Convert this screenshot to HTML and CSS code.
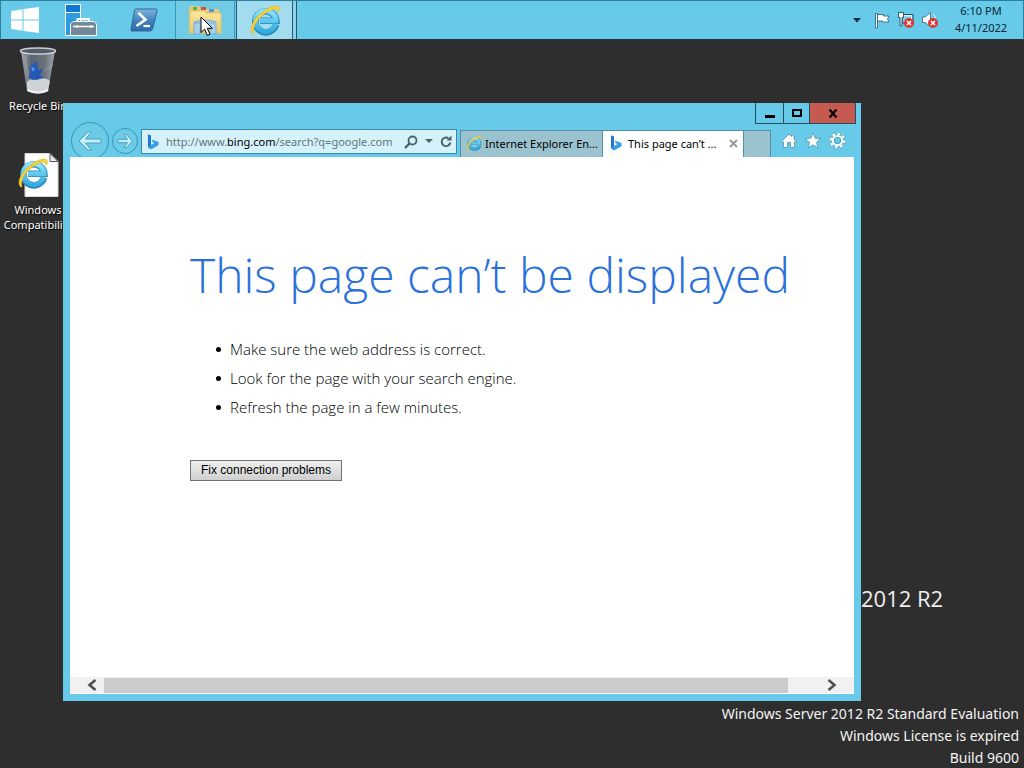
FILE: index.html
```
<!DOCTYPE html>
<html lang="en">
<head>
<meta charset="utf-8">
<title>Desktop</title>
<link rel="stylesheet" href="styles.css">
</head>
<body>
<svg class="defs" aria-hidden="true">
  <defs>
    <linearGradient id="ieBlue" x1="0" y1="0" x2="0" y2="1"><stop offset="0" stop-color="#8fe4fb"/><stop offset="1" stop-color="#37abe0"/></linearGradient>
    <linearGradient id="psBlue" x1="0" y1="0" x2="0" y2="1"><stop offset="0" stop-color="#82b4dc"/><stop offset=".5" stop-color="#4585be"/><stop offset="1" stop-color="#2b6aa8"/></linearGradient>
    <linearGradient id="bin" x1="0" y1="0" x2="1" y2="0"><stop offset="0" stop-color="#a5acb3"/><stop offset=".3" stop-color="#5b636d"/><stop offset=".7" stop-color="#6a727b"/><stop offset="1" stop-color="#a0a7ad"/></linearGradient>
    <linearGradient id="folder" x1="0" y1="0" x2="0" y2="1"><stop offset="0" stop-color="#fbe9a2"/><stop offset="1" stop-color="#e9c862"/></linearGradient>
    <symbol id="ie" viewBox="0 0 32 32">
      <path d="M27 20.500A10.500 10.500 0 1 1 27.300 16.800H11" fill="none" stroke="#2487bd" stroke-width="6.600"/>
      <path d="M26.500 20.300A10.300 10.300 0 1 1 27 16.800H11" fill="none" stroke="url(#ieBlue)" stroke-width="5"/>
      <path d="M4 30C-1 27 4 15 13 8.500C20 3 28 0 30 3.500C31 5 30 7 29 8.500C29 4 24 4 16 9.500C8 15 3 23 5 30Z" fill="#f7d43b" stroke="#dcae24" stroke-width=".6"/>
    </symbol>
    <symbol id="bing" viewBox="0 0 12 16">
      <path d="M1 0.500L4 1.600V11L7.500 9L5.700 8.200L4.700 5.500L11.500 8V11.300L4 15.500L1 13.500Z" fill="#35a0e8"/>
      <path d="M1 0.500L4 1.600V11L1 13.500Z" fill="#2277cc"/>
    </symbol>
  </defs>
</svg>
<main class="desktop">
  <header class="taskbar">
    <nav class="apps">
      <button class="app start" aria-label="Start">
        <svg width="28" height="26" viewBox="0 0 28 26"><path d="M0 4L11.500 2.300V12.500H0ZM12.500 2.100L28 0V12.500H12.500ZM0 13.500H11.500V23.700L0 22ZM12.500 13.500H28V26L12.500 23.900Z" fill="#fff"/></svg>
      </button>
      <button class="app" aria-label="Server Manager">
        <svg width="32" height="32" viewBox="0 0 32 32"><path d="M.500.500H15.500V31.500H.500Z" fill="#0f78d0" stroke="#fff"/><path d="M1 28V9H15V31H1Z" fill="#2c9be0"/><path d="M0 8.500H16" stroke="#fff"/><path d="M12.500 17.500V15H24V17.500" fill="none" stroke="#fff" stroke-width="2"/><path d="M5.500 20L8 17.500H29L31.500 20V31.500H5.500Z" fill="#73899a" stroke="#fff"/><path d="M8 22.500H29M12 21v3M26 21v3" stroke="#fff" stroke-width="1.300"/></svg>
      </button>
      <button class="app" aria-label="Windows PowerShell">
        <svg width="28" height="24" viewBox="0 0 28 24"><path d="M6 1H26Q27.500 1 27 3L22.500 21Q22 23 20 23H2Q.500 23 1 21L4.500 3Q5 1 6 1Z" fill="url(#psBlue)" stroke="#2a659f"/><path d="M8.500 5L15.500 11.500L6.500 18" fill="none" stroke="#fff" stroke-width="2.600"/><path d="M13.500 18H20" stroke="#fff" stroke-width="2.200"/></svg>
      </button>
      <button class="app hovered" aria-label="File Explorer">
        <svg width="34" height="30" viewBox="0 0 34 30"><path d="M1 26V4Q1 1 4 1H11L13 4H31V26Z" fill="#e6c878"/><path d="M5 2h4v3H5Z" fill="#5eae52"/><path d="M13 2h5v3h-5Z" fill="#c05648"/><path d="M21 4h5v3h-5Z" fill="#5695cf"/><path d="M2 6H16L18 8H33V28H2Z" fill="url(#folder)" stroke="#e3c367"/><path d="M6 17Q17 13 28 17V29H22V23H12V29H6Z" fill="#a7cfe9" stroke="#78add2"/><path d="M7 18h20" stroke="#4f90c8" stroke-dasharray="1 1"/></svg>
      </button>
      <button class="app active" aria-label="Internet Explorer"><svg width="32" height="32"><use href="#ie"/></svg></button>
      <span class="stack"></span>
    </nav>
    <div class="tray">
      <svg width="8" height="5" viewBox="0 0 8 5"><path d="M0 0H8L4 4.500Z" fill="#0b2b44"/></svg>
      <svg class="flag" width="17" height="17" viewBox="0 0 17 17"><path d="M1.500 1.500H3.500V16H1.500Z" fill="#fff" stroke="#1f5d78" stroke-width=".8"/><path d="M3.500 2.500H9.500V4H15L13.500 7L15 10H8.500V9H3.500Z" fill="#fff" stroke="#1f5d78" stroke-width=".8"/></svg>
      <svg width="18" height="18" viewBox="0 0 18 18"><path d="M5 3.500H16V12H5Z" fill="#7ccde6" stroke="#1f4d64"/><path d="M6.500 4.800H14.500V10.500" fill="none" stroke="#fff"/><path d="M1.500 1.500H6.500V6.500H5V15H3V6.500H1.500Z" fill="#fff" stroke="#1f4d64" stroke-width=".9"/><circle cx="12" cy="12" r="5" fill="#d93a35"/><path d="M10 10L14 14M14 10L10 14" stroke="#fff" stroke-width="1.500"/></svg>
      <svg width="18" height="18" viewBox="0 0 18 18"><path d="M1.500 6H4L9.500 1.500V15.500L4 11.500H1.500Z" fill="#fff" stroke="#2f6b84" stroke-width=".8"/><path d="M12 3.500Q14 5 14.500 7" fill="none" stroke="#fff"/><circle cx="12" cy="12" r="5" fill="#d93a35"/><path d="M10 10L14 14M14 10L10 14" stroke="#fff" stroke-width="1.500"/></svg>
      <div class="clock"><div>6:10 PM</div><div>4/11/2022</div></div>
    </div>
  </header>

  <div class="shortcut recycle">
    <svg width="38" height="48" viewBox="0 0 38 48"><path d="M2 4L8 44Q19 49 29 44L36 4Z" fill="url(#bin)"/><path d="M8 35Q12 30 18 33Q26 29 31 34L29 44Q19 49 8 44Z" fill="#cfd3d5"/><path d="M14 17L18 14L19 23L24 22L21 28L25 31L14 33L9 30L12 25L10 21Z" fill="#2458b5"/><path d="M12 20l4 1-2 4z" fill="#5b9be8"/><ellipse cx="19" cy="4" rx="17.500" ry="3" fill="#535c66" stroke="#c9ced2" stroke-width="1.500"/><path d="M25 24L34 18M6 10L11 42" stroke="#d4dade" stroke-opacity=".35"/><path d="M9 43Q19 48 29 43" fill="none" stroke="#eef0f1" stroke-width="2"/></svg>
    <span>Recycle Bin</span>
  </div>
  <div class="shortcut compat">
    <svg width="44" height="44" viewBox="0 0 44 44"><path d="M9 .500H34L42 8.500V43.500H9Z" fill="#fff" stroke="#d8d8d8"/><path d="M34 .500V8.500H42Z" fill="#ececec" stroke="#555"/><svg x="1" y="3" width="32" height="34"><use href="#ie"/></svg></svg>
    <span>Windows<br>Compatibility</span>
  </div>
  <div class="brand">2012 R2</div>
  <div class="watermark"><div>Windows Server 2012 R2 Standard Evaluation</div><div>Windows License is expired</div><div>Build 9600</div></div>

  <section class="window">
    <div class="caption">
      <button class="cap" aria-label="Minimize"><svg width="12" height="11" viewBox="0 0 12 11"><path d="M1 7H11V10H1Z"/></svg></button>
      <button class="cap" aria-label="Maximize"><svg width="12" height="11" viewBox="0 0 12 11"><path d="M2 2H10V8H2Z" fill="none" stroke="#000" stroke-width="2"/></svg></button>
      <button class="cap close" aria-label="Close"><svg width="10" height="9" viewBox="0 0 10 9"><path d="M1.500.500L8.500 8.500M8.500.500L1.500 8.500" stroke="#000" stroke-width="2.200"/></svg></button>
    </div>
    <div class="toolbar">
      <button class="nav back" aria-label="Back"><svg width="38" height="38" viewBox="0 0 38 38"><circle cx="19" cy="19" r="18.500" fill="#6ccbe7" stroke="#3a94b7"/><path d="M8 19L17 10H20.500L14.500 17H30V21H14.500L20.500 28H17Z" fill="#c6eefb" stroke="#4a9fc4"/></svg></button>
      <button class="nav forward" aria-label="Forward"><svg width="26" height="26" viewBox="0 0 26 26"><circle cx="13" cy="13" r="12.500" fill="#6ccbe7" stroke="#3a94b7"/><path d="M20.500 13L14.500 6.500H12L15.500 11.300H6V14.700H15.500L12 19.500H14.500Z" fill="#c6eefb" stroke="#4a9fc4"/></svg></button>
      <div class="address">
        <svg width="12" height="16"><use href="#bing"/></svg>
        <div class="url" role="textbox" aria-label="Address">http://www.<b>bing.com</b>/search?q=google.com</div>
        <button class="mini" aria-label="Search"><svg width="14" height="14" viewBox="0 0 14 14"><circle cx="8.500" cy="5.500" r="4" fill="none" stroke="#47606b" stroke-width="1.800"/><path d="M5.500 8.500L1 13" stroke="#47606b" stroke-width="2.400"/></svg></button>
        <button class="mini" aria-label="Show history"><svg width="8" height="5" viewBox="0 0 8 5"><path d="M0 0H8L4 4Z" fill="#47606b"/></svg></button>
        <button class="mini" aria-label="Refresh"><svg width="12" height="13" viewBox="0 0 12 13"><path d="M8.500 3.300A4.300 4.300 0 1 0 10.300 7.500" fill="none" stroke="#47606b" stroke-width="1.900"/><path d="M6.500 5.500L11.500 5.500V0.500Z" fill="#47606b"/></svg></button>
      </div>
      <div class="tabs">
        <button class="tab"><svg width="16" height="16"><use href="#ie"/></svg><span>Internet Explorer En...</span></button>
        <div class="tab current"><svg width="12" height="16"><use href="#bing"/></svg><span>This page can’t ...</span><button class="mini" aria-label="Close tab"><svg width="9" height="9" viewBox="0 0 9 9"><path d="M1 1L8 8M8 1L1 8" stroke="#999" stroke-width="2"/></svg></button></div>
        <button class="newtab" aria-label="New tab"></button>
      </div>
      <div class="tools">
        <button class="mini" aria-label="Home"><svg width="16" height="16" viewBox="0 0 16 16"><path d="M8 1L10.500 3.500V2H13V6L15.500 8.500L14.500 9.500L13.500 8.700V14.500H9.500V9.500H6.500V14.500H2.500V8.700L1.500 9.500L.500 8.500Z" fill="#fff" stroke="#3f8ba6" stroke-width=".7"/></svg></button>
        <button class="mini" aria-label="Favorites"><svg width="18" height="17" viewBox="0 0 18 17"><path d="M9 .800L11.200 6.200L17 6.500L12.500 10.200L14 16L9 12.800L4 16L5.500 10.200L1 6.500L6.800 6.200Z" fill="#fff" stroke="#3f8ba6" stroke-width=".7"/></svg></button>
        <button class="mini" aria-label="Tools"><svg width="17" height="17" viewBox="0 0 17 17"><circle cx="8.500" cy="8.500" r="6.800" fill="none" stroke="#3f8ba6" stroke-width="3.400" stroke-dasharray="3.100 2.240"/><circle cx="8.500" cy="8.500" r="6.800" fill="none" stroke="#fff" stroke-width="2.600" stroke-dasharray="2.600 2.740"/><circle cx="8.500" cy="8.500" r="4.600" fill="none" stroke="#fff" stroke-width="2"/><circle cx="8.500" cy="8.500" r="3.200" fill="none" stroke="#3f8ba6" stroke-width=".7"/></svg></button>
      </div>
    </div>
    <div class="page">
      <article class="message">
        <h1>This page can’t be displayed</h1>
        <ul>
          <li>Make sure the web address is correct.</li>
          <li>Look for the page with your search engine.</li>
          <li>Refresh the page in a few minutes.</li>
        </ul>
        <button class="fix">Fix connection problems</button>
      </article>
      <div class="scroll">
        <svg width="10" height="12" viewBox="0 0 10 12"><path d="M8.500 1L2.500 6L8.500 11" fill="none" stroke="#505050" stroke-width="2.600"/></svg>
        <span class="thumb"></span>
        <svg width="10" height="12" viewBox="0 0 10 12"><path d="M1.500 1L7.500 6L1.500 11" fill="none" stroke="#505050" stroke-width="2.600"/></svg>
      </div>
    </div>
  </section>
  <svg class="pointer" width="14" height="21" viewBox="0 0 14 21"><path d="M1 1V16.500L4.600 13.200L7.300 19.500L10 18.300L7.300 12.300H12.300Z" fill="#fff" stroke="#000"/></svg>
</main>
</body>
</html>
```
FILE: styles.css
```
* { box-sizing: border-box; }
body { margin: 0; font-family: "Noto Sans", "Open Sans", sans-serif; font-size: 11px; color: #000; }
button { margin: 0; padding: 0; border: 0; background: none; font: inherit; color: inherit; }
svg { display: block; flex: none; }
.defs { position: absolute; width: 0; height: 0; }
.desktop { position: relative; min-height: 100vh; overflow: hidden; background: #2e2e2e; }

.taskbar { display: flex; justify-content: space-between; height: 40px; background: #66cae8; border: 1px solid #2d7f9f; border-bottom-color: #23343c; }
.apps { display: flex; }
.app { display: flex; align-items: center; justify-content: center; width: 62px; }
.start { width: 47px; }
.start + .app { width: 65px; }
.hovered { width: 60px; border: solid #3b95b6; border-width: 0 1px; background: #72cbe4; }
.active { width: 57px; margin-left: 1px; background: #a4dcef; border: solid #28586c; border-width: 0 1px; }
.stack { width: 4px; background: #8bd4eb; border-right: 1px solid #28586c; }
.tray { display: flex; align-items: center; gap: 6px; }
.flag { margin-left: 7px; }
.clock { width: 78px; padding: 0 6px 2px 0; text-align: center; line-height: 17px; color: #0b2436; }

.shortcut { position: absolute; left: 0; display: flex; flex-direction: column; align-items: center; width: 76px; gap: 3px; color: #fff; text-align: center; line-height: 15px; text-shadow: 1px 1px 1px #000; }
.recycle { top: 47px; }
.compat { top: 153px; gap: 5px; }
.brand { position: absolute; left: 861px; top: 582px; font-family: "Open Sans", sans-serif; font-size: 22px; line-height: 33px; color: #eee; }
.watermark { position: absolute; right: 5px; top: 703px; font-size: 14px; line-height: 22px; color: #f4f4f4; text-align: right; }
.pointer { position: absolute; left: 200px; top: 16px; }

.window { position: absolute; top: 103px; right: 163px; bottom: 67px; left: 63px; display: flex; flex-direction: column; padding: 0 7px 7px; background: #66cae8; }
.caption { display: flex; justify-content: flex-end; height: 26px; margin-right: -2px; }
.cap { display: flex; align-items: center; justify-content: center; width: 29px; height: 21px; border: 1px solid #214f62; border-top: 0; }
.cap + .cap { border-left: 0; width: 26px; }
.cap + .cap.close { width: 46px; background: #c75a50; }
.toolbar { display: flex; height: 28px; }
.nav { display: flex; }
.back { margin: -7px 0 0 1px; }
.forward { margin: -1px 3px 0; }
.address { display: flex; align-items: center; flex: 1; min-width: 0; height: 25px; padding: 0 4px 0 5px; gap: 7px; background: #d5f1f9; border: 1px solid #3689a8; }
.mini { display: flex; align-items: center; }
.url { flex: 1; min-width: 0; overflow: hidden; white-space: nowrap; line-height: 20px; color: #5f7780; }
.url b { font-weight: 400; color: #000; }
.tabs { display: flex; margin: 1px 0 0 3px; }
.tab { display: flex; align-items: center; gap: 3px; width: 143px; padding: 0 5px 2px; background: #9ac3cf; border: solid #568ea3; border-width: 1px 1px 0; white-space: nowrap; }
.tab.current { width: 141px; padding: 0 5px 2px 7px; gap: 6px; background: #fff; border-left: 0; }
.tab span { flex: 1; text-align: left; }
.newtab { width: 27px; background: #9ac3cf; border: solid #568ea3; border-width: 1px 1px 0 0; }
.tools { display: flex; align-items: center; gap: 7px; padding: 0 8px 5px 10px; }

.page { position: relative; display: flex; flex: 1; flex-direction: column; min-height: 0; padding-bottom: 1px; background: #fff; }
.message { flex: 1; padding: 84px 0 0 120px; font-family: "Open Sans", sans-serif; font-weight: 300; }
h1 { margin: 0; font-size: 48px; line-height: 68px; font-weight: 300; color: #2b71dc; white-space: nowrap; }
ul { margin: 26px 0 38px; padding: 0 0 0 26px; font-size: 15px; line-height: 29px; list-style: none; }
li { display: flex; align-items: center; gap: 9px; }
li::before { content: ""; width: 5px; height: 5px; border-radius: 50%; background: #000; }
.fix { width: 152px; height: 21px; padding-bottom: 2px; border: 1px solid #707070; background: linear-gradient(#f0f0f0, #cfcfcf); font-family: "Liberation Sans", Arial, sans-serif; font-size: 12px; font-weight: 400; }
.scroll { display: flex; align-items: center; height: 16px; padding: 0 17px; background: #f1f1f1; }
.thumb { flex: 1; height: 15px; margin: 0 39px 0 7px; background: #cbcbcb; }
```
